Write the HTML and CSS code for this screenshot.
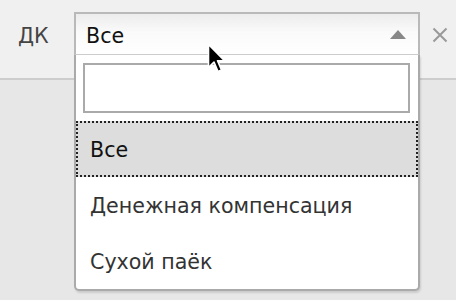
FILE: index.html
```html
<!DOCTYPE html>
<html lang="ru">
<head>
<meta charset="utf-8">
<title>Select</title>
<link rel="stylesheet" href="styles.css">
</head>
<body>
<div class="page">
  <div class="topbar">
    <span class="label">ДК</span>
    <div class="select">
      <span class="value">Все</span>
      <span class="arrow"></span>
      <div class="dropdown">
        <div class="search"><input type="text" class="search-input"></div>
        <ul class="results">
          <li class="result highlighted">Все</li>
          <li class="result">Денежная компенсация</li>
          <li class="result">Сухой паёк</li>
        </ul>
      </div>
    </div>
    <span class="clear">
      <svg width="16" height="16" viewBox="0 0 16 16"><path d="M1.5 1.5 L14.5 14.5 M14.5 1.5 L1.5 14.5" stroke="#999" stroke-width="2" fill="none"/></svg>
    </span>
  </div>
  <div class="content"></div>
  <svg class="cursor" width="20" height="31" viewBox="0 0 20 31">
    <path d="M1.5 1.5 L1.5 24.5 L7 19 L11 28.5 L14.5 27 L10.5 17.8 L17.5 17.8 Z" fill="#000" stroke="#fff" stroke-width="1.6" stroke-linejoin="round"/>
  </svg>
</div>
</body>
</html>
```

FILE: styles.css
```css
html, body {
  margin: 0;
  padding: 0;
}
body {
  background: #e7e7e7;
  font-family: "DejaVu Sans", Verdana, sans-serif;
  font-size: 20.6px;
}
.page {
  position: relative;
  width: 456px;
  height: 300px;
  overflow: hidden;
}
.topbar {
  box-sizing: border-box;
  height: 80px;
  background: #f0f0f0;
  border-bottom: 2px solid #cdcdcd;
  padding: 12px 0 0 18px;
  display: flex;
  align-items: flex-start;
}
.label {
  width: 56px;
  color: #444;
  line-height: 23px;
  padding-top: 13px;
}
.select {
  position: relative;
  box-sizing: border-box;
  width: 346px;
  height: 43px;
  border: 2px solid #b9b9b9;
  border-bottom: 1px solid #cccccc;
  background: linear-gradient(to bottom, #ececec 0%, #fafafa 45%, #ffffff 100%);
  padding: 11px 0 0 10px;
  line-height: 23px;
  color: #111;
}
.value {
  display: block;
}
.arrow {
  position: absolute;
  right: 12px;
  top: 16px;
  width: 0;
  height: 0;
  border-left: 8px solid transparent;
  border-right: 8px solid transparent;
  border-bottom: 9px solid #888;
}
.clear {
  margin-left: 12px;
  padding-top: 15px;
  display: block;
  line-height: 0;
}
.dropdown {
  position: absolute;
  top: 41px;
  left: -2px;
  box-sizing: border-box;
  width: 346px;
  background: #fff;
  border: 2px solid #aaa;
  border-top: 0;
  border-radius: 0 0 5px 5px;
  box-shadow: 1px 2px 2px rgba(0, 0, 0, 0.12);
  z-index: 5;
}
.search {
  padding: 8px 8px 0 7px;
}
.search-input {
  display: block;
  box-sizing: border-box;
  width: 327px;
  height: 50px;
  margin: 0;
  border: 2px solid #aaa;
  background: #fff;
  outline: none;
}
.results {
  list-style: none;
  margin: 8px 0 0 0;
  padding: 0;
}
.result {
  box-sizing: border-box;
  height: 56px;
  border: 2px dotted transparent;
  padding: 2px 0 0 12px;
  line-height: 50px;
  color: #333;
  white-space: nowrap;
}
.result.highlighted {
  background: #dddddd;
  border-color: #222;
  color: #111;
}
.content {
  height: 220px;
}
.cursor {
  position: absolute;
  left: 207px;
  top: 43px;
  z-index: 10;
}
```
